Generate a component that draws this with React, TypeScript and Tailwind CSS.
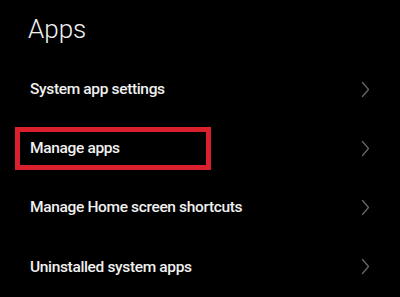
const rows = [
  "System app settings",
  "Manage apps",
  "Manage Home screen shortcuts",
  "Uninstalled system apps",
];

function Chevron() {
  return (
    <svg width="9" height="17" viewBox="0 0 9 17" fill="none">
      <polyline
        points="1.5,1.5 7.5,8.5 1.5,15.5"
        stroke="#666666"
        strokeWidth="1.3"
        strokeLinecap="round"
        strokeLinejoin="round"
      />
    </svg>
  );
}

export default function App() {
  return (
    <div
      className="w-[400px] h-[297px] overflow-hidden bg-black text-[#f0f0f0]"
      style={{ fontFamily: "Roboto, 'Noto Sans', sans-serif" }}
    >
      {/* header */}
      <div className="h-[59.5px] pt-[13px] pl-[28px]">
        <h1 className="text-[26px] leading-[32px] font-light">Apps</h1>
      </div>

      {rows.map((label, i) => (
        <div
          key={label}
          className="h-[59.2px] flex items-center justify-between pr-[30px]"
        >
          {i === 1 ? (
            <div className="ml-[15px] w-[196px] h-[43px] border-[5px] border-[#d9202c] flex items-center pl-[10px]">
              <span className="text-[15.5px] leading-[20px] font-medium tracking-[-0.35px]">
                {label}
              </span>
            </div>
          ) : (
            <span className="pl-[30px] text-[15.5px] leading-[20px] font-medium tracking-[-0.35px]">
              {label}
            </span>
          )}
          <Chevron />
        </div>
      ))}
    </div>
  );
}
